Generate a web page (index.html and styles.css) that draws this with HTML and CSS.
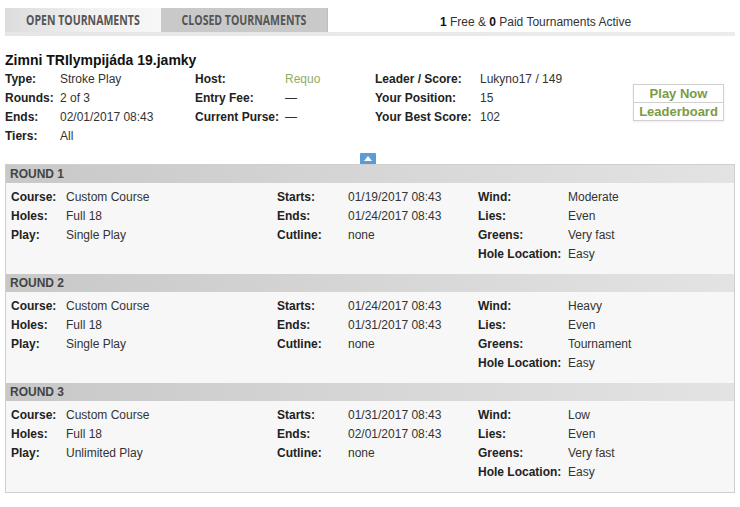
FILE: index.html
```html
<!DOCTYPE html>
<html lang="en">
<head>
    <meta charset="UTF-8">
    <title>Tournaments</title>
    <link rel="stylesheet" href="styles.css">
</head>
<body>
    <div class="tab-bar">
        <div class="tab tab-open"><span>OPEN TOURNAMENTS</span></div>
        <div class="tab tab-closed"><span>CLOSED TOURNAMENTS</span></div>
        <div class="active-count"><b>1</b> Free &amp; <b>0</b> Paid Tournaments Active</div>
    </div>
    <div class="tab-strip"></div>

    <h1 class="title">Zimni TRIlympijáda 19.jamky</h1>
    <div class="summary">
        <div class="info">
            <span class="lbl">Type:</span><span>Stroke Play</span>
            <span class="lbl">Host:</span><span class="host">Requo</span>
            <span class="lbl">Leader / Score:</span><span>Lukyno17 / 149</span>

            <span class="lbl">Rounds:</span><span>2 of 3</span>
            <span class="lbl">Entry Fee:</span><span>—</span>
            <span class="lbl">Your Position:</span><span>15</span>

            <span class="lbl">Ends:</span><span>02/01/2017 08:43</span>
            <span class="lbl">Current Purse:</span><span>—</span>
            <span class="lbl">Your Best Score:</span><span>102</span>

            <span class="lbl">Tiers:</span><span>All</span>
        </div>
        <div class="actions">
            <a class="action">Play Now</a>
            <a class="action">Leaderboard</a>
        </div>
    </div>

    <div class="toggle-row">
        <button class="toggle">
            <svg width="8" height="5" viewBox="0 0 8 5"><polygon points="0,5 4,0 8,5" fill="#fff"/></svg>
        </button>
    </div>

    <div class="rounds">
        <div class="round">
            <div class="round-head">ROUND 1</div>
            <div class="round-body">
                <div class="group g1">
                    <span class="lbl">Course:</span><span>Custom Course</span>
                    <span class="lbl">Holes:</span><span>Full 18</span>
                    <span class="lbl">Play:</span><span>Single Play</span>
                </div>
                <div class="group g2">
                    <span class="lbl">Starts:</span><span>01/19/2017 08:43</span>
                    <span class="lbl">Ends:</span><span>01/24/2017 08:43</span>
                    <span class="lbl">Cutline:</span><span>none</span>
                </div>
                <div class="group g3">
                    <span class="lbl">Wind:</span><span>Moderate</span>
                    <span class="lbl">Lies:</span><span>Even</span>
                    <span class="lbl">Greens:</span><span>Very fast</span>
                    <span class="lbl">Hole Location:</span><span>Easy</span>
                </div>
            </div>
        </div>
        <div class="round">
            <div class="round-head">ROUND 2</div>
            <div class="round-body">
                <div class="group g1">
                    <span class="lbl">Course:</span><span>Custom Course</span>
                    <span class="lbl">Holes:</span><span>Full 18</span>
                    <span class="lbl">Play:</span><span>Single Play</span>
                </div>
                <div class="group g2">
                    <span class="lbl">Starts:</span><span>01/24/2017 08:43</span>
                    <span class="lbl">Ends:</span><span>01/31/2017 08:43</span>
                    <span class="lbl">Cutline:</span><span>none</span>
                </div>
                <div class="group g3">
                    <span class="lbl">Wind:</span><span>Heavy</span>
                    <span class="lbl">Lies:</span><span>Even</span>
                    <span class="lbl">Greens:</span><span>Tournament</span>
                    <span class="lbl">Hole Location:</span><span>Easy</span>
                </div>
            </div>
        </div>
        <div class="round">
            <div class="round-head">ROUND 3</div>
            <div class="round-body">
                <div class="group g1">
                    <span class="lbl">Course:</span><span>Custom Course</span>
                    <span class="lbl">Holes:</span><span>Full 18</span>
                    <span class="lbl">Play:</span><span>Unlimited Play</span>
                </div>
                <div class="group g2">
                    <span class="lbl">Starts:</span><span>01/31/2017 08:43</span>
                    <span class="lbl">Ends:</span><span>02/01/2017 08:43</span>
                    <span class="lbl">Cutline:</span><span>none</span>
                </div>
                <div class="group g3">
                    <span class="lbl">Wind:</span><span>Low</span>
                    <span class="lbl">Lies:</span><span>Even</span>
                    <span class="lbl">Greens:</span><span>Very fast</span>
                    <span class="lbl">Hole Location:</span><span>Easy</span>
                </div>
            </div>
        </div>
    </div>
</body>
</html>
```

FILE: styles.css
```css
body {
    margin: 0;
    padding: 0 5px;
    background: #fff;
    color: #333;
    font-family: 'Liberation Sans', Arial, sans-serif;
    font-size: 12px;
}

/* tabs */
.tab-bar {
    display: flex;
    margin-top: 8px;
    height: 24px;
}

.tab {
    display: flex;
    justify-content: center;
    font-family: 'Open Sans', sans-serif;
    font-weight: 700;
    font-size: 13.5px;
    color: #555;
    line-height: 25px;
}

.tab span {
    display: inline-block;
    transform: scaleX(0.78); /* fonte condensada */
    white-space: nowrap;
}

.tab-open {
    width: 156px;
    background: linear-gradient(to right, #dcdcdc, #f1f1f1 55%, #f7f7f7);
}

.tab-closed {
    width: 166px;
    background: #c9c9c9;
    border-right: 1px solid #bdbdbd;
}

.active-count {
    flex: 1;
    text-align: center;
    line-height: 24px;
    padding-top: 2px;
    padding-left: 8px;
    color: #333;
}

.active-count b {
    color: #111;
}

.tab-strip {
    height: 4px;
    background: linear-gradient(to right, #e6e6e6, #ececec);
}

/* summary */
.title {
    margin: 15px 0 0;
    font-size: 14px;
    line-height: 19px;
    color: #111;
}

.summary {
    display: flex;
    align-items: flex-start;
}

.info {
    display: grid;
    grid-template-columns: 55px 135px 90px 90px 105px 153px;
    grid-auto-rows: 19px;
    line-height: 19px;
}

.lbl {
    font-weight: 700;
    color: #222;
}

.host {
    color: #8fae62;
}

.actions {
    display: flex;
    flex-direction: column;
    width: 89px;
    margin-top: 14px;
    border: 1px solid #d0d0d0;
    box-shadow: 0 1px 2px rgba(0, 0, 0, 0.08);
}

.action {
    height: 17px;
    line-height: 17px;
    text-align: center;
    font-size: 13px;
    font-weight: 700;
    color: #7a9b45;
}

.action + .action {
    border-top: 1px solid #d0d0d0;
}

/* toggle */
.toggle-row {
    display: flex;
    justify-content: center;
    padding-top: 7px;
    padding-right: 4px;
}

.toggle {
    display: flex;
    align-items: center;
    justify-content: center;
    width: 16px;
    height: 11px;
    padding: 0;
    border: none;
    border-radius: 1px 1px 0 0;
    background: #5d9bd6;
}

/* rounds */
.rounds {
    border: 1px solid #cfcfcf;
    background: #f7f7f7;
}

.round-head {
    height: 18px;
    line-height: 19px;
    padding-left: 4px;
    font-weight: 700;
    color: #444;
    background: linear-gradient(to right, #c8c8c8, #d6d6d6 50%, #e3e3e3);
}

.round-body {
    display: flex;
    height: 91px;
    box-sizing: border-box;
    padding: 5px 0 0 5px;
    color: #333;
}

.group {
    display: grid;
    grid-auto-rows: 19px;
    line-height: 19px;
    align-content: start;
}

.g1 {
    grid-template-columns: 55px 211px;
}

.g2 {
    grid-template-columns: 71px 130px;
}

.g3 {
    grid-template-columns: 90px 150px;
}
```
